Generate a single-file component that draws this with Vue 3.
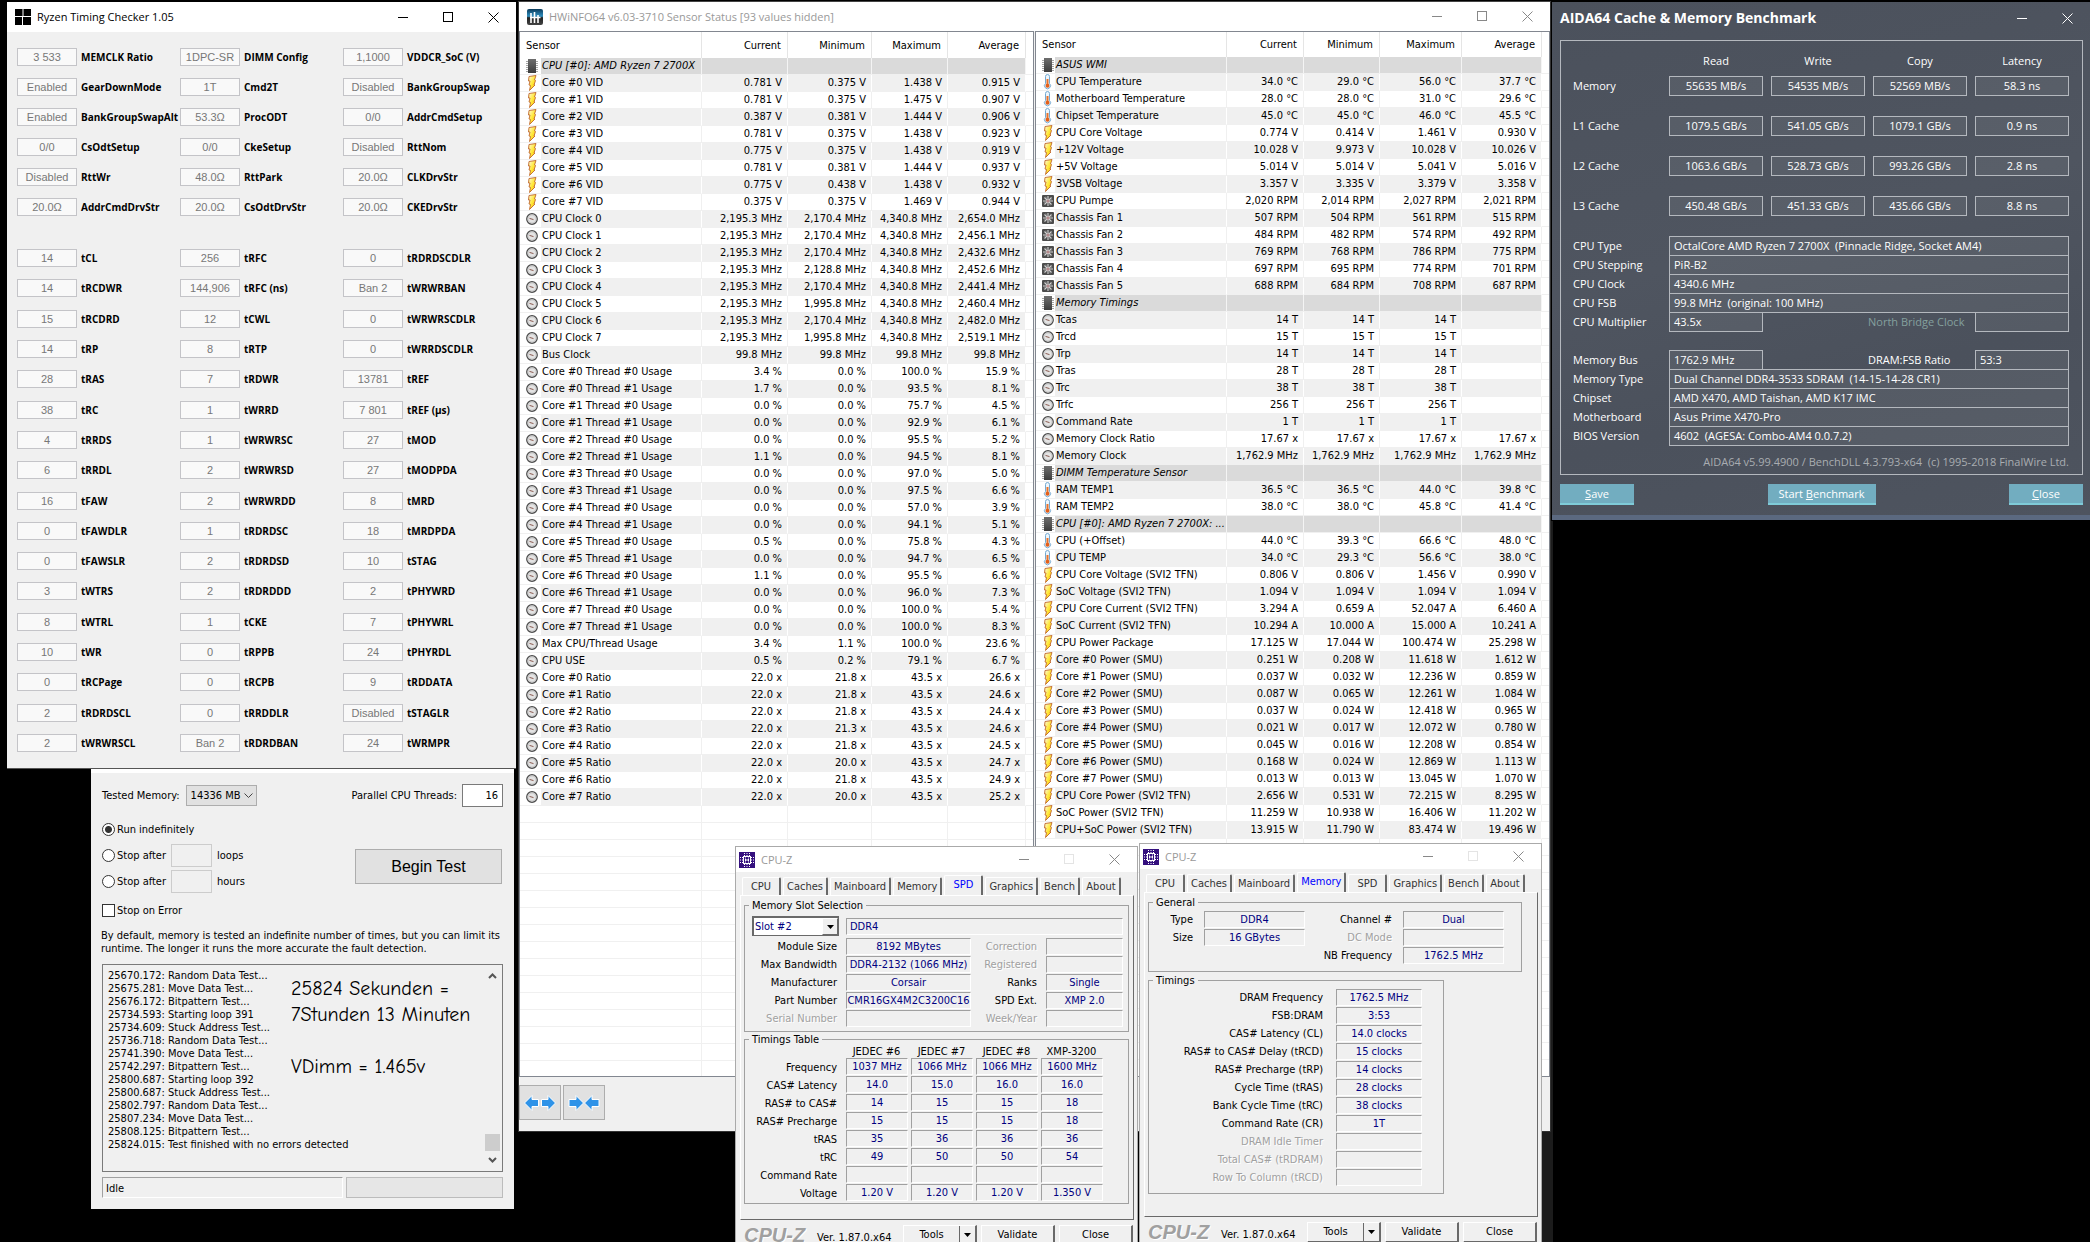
<script setup>
const rtcTop = [
  ['3 533', 'MEMCLK Ratio'], ['1DPC-SR', 'DIMM Config'], ['1,1000', 'VDDCR_SoC (V)'],
  ['Enabled', 'GearDownMode'], ['1T', 'Cmd2T'], ['Disabled', 'BankGroupSwap'],
  ['Enabled', 'BankGroupSwapAlt'], ['53.3Ω', 'ProcODT'], ['0/0', 'AddrCmdSetup'],
  ['0/0', 'CsOdtSetup'], ['0/0', 'CkeSetup'], ['Disabled', 'RttNom'],
  ['Disabled', 'RttWr'], ['48.0Ω', 'RttPark'], ['20.0Ω', 'CLKDrvStr'],
  ['20.0Ω', 'AddrCmdDrvStr'], ['20.0Ω', 'CsOdtDrvStr'], ['20.0Ω', 'CKEDrvStr'],
]
const rtcBottom = [
  ['14', 'tCL'], ['256', 'tRFC'], ['0', 'tRDRDSCDLR'],
  ['14', 'tRCDWR'], ['144,906', 'tRFC (ns)'], ['Ban 2', 'tWRWRBAN'],
  ['15', 'tRCDRD'], ['12', 'tCWL'], ['0', 'tWRWRSCDLR'],
  ['14', 'tRP'], ['8', 'tRTP'], ['0', 'tWRRDSCDLR'],
  ['28', 'tRAS'], ['7', 'tRDWR'], ['13781', 'tREF'],
  ['38', 'tRC'], ['1', 'tWRRD'], ['7 801', 'tREF (µs)'],
  ['4', 'tRRDS'], ['1', 'tWRWRSC'], ['27', 'tMOD'],
  ['6', 'tRRDL'], ['2', 'tWRWRSD'], ['27', 'tMODPDA'],
  ['16', 'tFAW'], ['2', 'tWRWRDD'], ['8', 'tMRD'],
  ['0', 'tFAWDLR'], ['1', 'tRDRDSC'], ['18', 'tMRDPDA'],
  ['0', 'tFAWSLR'], ['2', 'tRDRDSD'], ['10', 'tSTAG'],
  ['3', 'tWTRS'], ['2', 'tRDRDDD'], ['2', 'tPHYWRD'],
  ['8', 'tWTRL'], ['1', 'tCKE'], ['7', 'tPHYWRL'],
  ['10', 'tWR'], ['0', 'tRPPB'], ['24', 'tPHYRDL'],
  ['0', 'tRCPage'], ['0', 'tRCPB'], ['9', 'tRDDATA'],
  ['2', 'tRDRDSCL'], ['0', 'tRRDDLR'], ['Disabled', 'tSTAGLR'],
  ['2', 'tWRWRSCL'], ['Ban 2', 'tRDRDBAN'], ['24', 'tWRMPR'],
]

const log = `25670.172: Random Data Test...
25675.281: Move Data Test...
25676.172: Bitpattern Test...
25734.593: Starting loop 391
25734.609: Stuck Address Test...
25736.718: Random Data Test...
25741.390: Move Data Test...
25742.297: Bitpattern Test...
25800.687: Starting loop 392
25800.687: Stuck Address Test...
25802.797: Random Data Test...
25807.234: Move Data Test...
25808.125: Bitpattern Test...
25824.015: Test finished with no errors detected`

/* One sensor per line: icon|name|unit|current|minimum|maximum|average */
const parse = (text) =>
  text.trim().split('\n').map((line) => {
    const [icon, name, unit, ...nums] = line.trim().split('|')
    return { icon, name, values: [0, 1, 2, 3].map((i) => (nums[i] ? `${nums[i]} ${unit}` : '')) }
  })

const leftRows = parse(`
chip|CPU [#0]: AMD Ryzen 7 2700X
bolt|Core #0 VID|V|0.781|0.375|1.438|0.915
bolt|Core #1 VID|V|0.781|0.375|1.475|0.907
bolt|Core #2 VID|V|0.387|0.381|1.444|0.906
bolt|Core #3 VID|V|0.781|0.375|1.438|0.923
bolt|Core #4 VID|V|0.775|0.375|1.438|0.919
bolt|Core #5 VID|V|0.781|0.381|1.444|0.937
bolt|Core #6 VID|V|0.775|0.438|1.438|0.932
bolt|Core #7 VID|V|0.375|0.375|1.469|0.944
clock|CPU Clock 0|MHz|2,195.3|2,170.4|4,340.8|2,654.0
clock|CPU Clock 1|MHz|2,195.3|2,170.4|4,340.8|2,456.1
clock|CPU Clock 2|MHz|2,195.3|2,170.4|4,340.8|2,432.6
clock|CPU Clock 3|MHz|2,195.3|2,128.8|4,340.8|2,452.6
clock|CPU Clock 4|MHz|2,195.3|2,170.4|4,340.8|2,441.4
clock|CPU Clock 5|MHz|2,195.3|1,995.8|4,340.8|2,460.4
clock|CPU Clock 6|MHz|2,195.3|2,170.4|4,340.8|2,482.0
clock|CPU Clock 7|MHz|2,195.3|1,995.8|4,340.8|2,519.1
clock|Bus Clock|MHz|99.8|99.8|99.8|99.8
clock|Core #0 Thread #0 Usage|%|3.4|0.0|100.0|15.9
clock|Core #0 Thread #1 Usage|%|1.7|0.0|93.5|8.1
clock|Core #1 Thread #0 Usage|%|0.0|0.0|75.7|4.5
clock|Core #1 Thread #1 Usage|%|0.0|0.0|92.9|6.1
clock|Core #2 Thread #0 Usage|%|0.0|0.0|95.5|5.2
clock|Core #2 Thread #1 Usage|%|1.1|0.0|94.5|8.1
clock|Core #3 Thread #0 Usage|%|0.0|0.0|97.0|5.0
clock|Core #3 Thread #1 Usage|%|0.0|0.0|97.5|6.6
clock|Core #4 Thread #0 Usage|%|0.0|0.0|57.0|3.9
clock|Core #4 Thread #1 Usage|%|0.0|0.0|94.1|5.1
clock|Core #5 Thread #0 Usage|%|0.5|0.0|75.8|4.3
clock|Core #5 Thread #1 Usage|%|0.0|0.0|94.7|6.5
clock|Core #6 Thread #0 Usage|%|1.1|0.0|95.5|6.6
clock|Core #6 Thread #1 Usage|%|0.0|0.0|96.0|7.3
clock|Core #7 Thread #0 Usage|%|0.0|0.0|100.0|5.4
clock|Core #7 Thread #1 Usage|%|0.0|0.0|100.0|8.3
clock|Max CPU/Thread Usage|%|3.4|1.1|100.0|23.6
clock|CPU USE|%|0.5|0.2|79.1|6.7
clock|Core #0 Ratio|x|22.0|21.8|43.5|26.6
clock|Core #1 Ratio|x|22.0|21.8|43.5|24.6
clock|Core #2 Ratio|x|22.0|21.8|43.5|24.4
clock|Core #3 Ratio|x|22.0|21.3|43.5|24.6
clock|Core #4 Ratio|x|22.0|21.8|43.5|24.5
clock|Core #5 Ratio|x|22.0|20.0|43.5|24.7
clock|Core #6 Ratio|x|22.0|21.8|43.5|24.9
clock|Core #7 Ratio|x|22.0|20.0|43.5|25.2`)

const rightRows = parse(`
chip|ASUS WMI
temp|CPU Temperature|°C|34.0|29.0|56.0|37.7
temp|Motherboard Temperature|°C|28.0|28.0|31.0|29.6
temp|Chipset Temperature|°C|45.0|45.0|46.0|45.5
bolt|CPU Core Voltage|V|0.774|0.414|1.461|0.930
bolt|+12V Voltage|V|10.028|9.973|10.028|10.026
bolt|+5V Voltage|V|5.014|5.014|5.041|5.016
bolt|3VSB Voltage|V|3.357|3.335|3.379|3.358
fan|CPU Pumpe|RPM|2,020|2,014|2,027|2,021
fan|Chassis Fan 1|RPM|507|504|561|515
fan|Chassis Fan 2|RPM|484|482|574|492
fan|Chassis Fan 3|RPM|769|768|786|775
fan|Chassis Fan 4|RPM|697|695|774|701
fan|Chassis Fan 5|RPM|688|684|708|687
chip|Memory Timings
clock|Tcas|T|14|14|14
clock|Trcd|T|15|15|15
clock|Trp|T|14|14|14
clock|Tras|T|28|28|28
clock|Trc|T|38|38|38
clock|Trfc|T|256|256|256
clock|Command Rate|T|1|1|1
clock|Memory Clock Ratio|x|17.67|17.67|17.67|17.67
clock|Memory Clock|MHz|1,762.9|1,762.9|1,762.9|1,762.9
chip|DIMM Temperature Sensor
temp|RAM TEMP1|°C|36.5|36.5|44.0|39.8
temp|RAM TEMP2|°C|38.0|38.0|45.8|41.4
chip|CPU [#0]: AMD Ryzen 7 2700X: ...
temp|CPU (+Offset)|°C|44.0|39.3|66.6|48.0
temp|CPU TEMP|°C|34.0|29.3|56.6|38.0
bolt|CPU Core Voltage (SVI2 TFN)|V|0.806|0.806|1.456|0.990
bolt|SoC Voltage (SVI2 TFN)|V|1.094|1.094|1.094|1.094
bolt|CPU Core Current (SVI2 TFN)|A|3.294|0.659|52.047|6.460
bolt|SoC Current (SVI2 TFN)|A|10.294|10.000|15.000|10.241
bolt|CPU Power Package|W|17.125|17.044|100.474|25.298
bolt|Core #0 Power (SMU)|W|0.251|0.208|11.618|1.612
bolt|Core #1 Power (SMU)|W|0.037|0.032|12.236|0.859
bolt|Core #2 Power (SMU)|W|0.087|0.065|12.261|1.084
bolt|Core #3 Power (SMU)|W|0.037|0.024|12.418|0.965
bolt|Core #4 Power (SMU)|W|0.021|0.017|12.072|0.780
bolt|Core #5 Power (SMU)|W|0.045|0.016|12.208|0.854
bolt|Core #6 Power (SMU)|W|0.168|0.024|12.869|1.113
bolt|Core #7 Power (SMU)|W|0.013|0.013|13.045|1.070
bolt|CPU Core Power (SVI2 TFN)|W|2.656|0.531|72.215|8.295
bolt|SoC Power (SVI2 TFN)|W|11.259|10.938|16.406|11.202
bolt|CPU+SoC Power (SVI2 TFN)|W|13.915|11.790|83.474|19.496`)

const panels = [
  { id: 'left', rows: leftRows, empty: 16, cols: [21, 161, 86, 84, 76, 78] },
  { id: 'right', rows: rightRows, empty: 15, cols: [19, 172, 77, 76, 82, 80] },
]
const columns = ['Current', 'Minimum', 'Maximum', 'Average']

const benchmarks = [
  ['Memory', '55635 MB/s', '54535 MB/s', '52569 MB/s', '58.3 ns'],
  ['L1 Cache', '1079.5 GB/s', '541.05 GB/s', '1079.1 GB/s', '0.9 ns'],
  ['L2 Cache', '1063.6 GB/s', '528.73 GB/s', '993.26 GB/s', '2.8 ns'],
  ['L3 Cache', '450.48 GB/s', '451.33 GB/s', '435.66 GB/s', '8.8 ns'],
]
const cpuInfo = [
  { label: 'CPU Type', value: 'OctalCore AMD Ryzen 7 2700X  (Pinnacle Ridge, Socket AM4)' },
  { label: 'CPU Stepping', value: 'PiR-B2' },
  { label: 'CPU Clock', value: '4340.6 MHz' },
  { label: 'CPU FSB', value: '99.8 MHz  (original: 100 MHz)' },
  { label: 'CPU Multiplier', value: '43.5x', label2: 'North Bridge Clock', value2: '', off: true },
]
const memInfo = [
  { label: 'Memory Bus', value: '1762.9 MHz', label2: 'DRAM:FSB Ratio', value2: '53:3' },
  { label: 'Memory Type', value: 'Dual Channel DDR4-3533 SDRAM  (14-15-14-28 CR1)' },
  { label: 'Chipset', value: 'AMD X470, AMD Taishan, AMD K17 IMC' },
  { label: 'Motherboard', value: 'Asus Prime X470-Pro' },
  { label: 'BIOS Version', value: '4602  (AGESA: Combo-AM4 0.0.7.2)' },
]

const tabs = ['CPU', 'Caches', 'Mainboard', 'Memory', 'SPD', 'Graphics', 'Bench', 'About']
const spdFields = [
  ['Module Size', '8192 MBytes', 'Correction', ''],
  ['Max Bandwidth', 'DDR4-2132 (1066 MHz)', 'Registered', ''],
  ['Manufacturer', 'Corsair', 'Ranks', 'Single'],
  ['Part Number', 'CMR16GX4M2C3200C16', 'SPD Ext.', 'XMP 2.0'],
  ['Serial Number', '', 'Week/Year', ''],
]
const profiles = ['JEDEC #6', 'JEDEC #7', 'JEDEC #8', 'XMP-3200']
const profileRows = [
  ['Frequency', '1037 MHz', '1066 MHz', '1066 MHz', '1600 MHz'],
  ['CAS# Latency', '14.0', '15.0', '16.0', '16.0'],
  ['RAS# to CAS#', '14', '15', '15', '18'],
  ['RAS# Precharge', '15', '15', '15', '18'],
  ['tRAS', '35', '36', '36', '36'],
  ['tRC', '49', '50', '50', '54'],
  ['Command Rate', '', '', '', ''],
  ['Voltage', '1.20 V', '1.20 V', '1.20 V', '1.350 V'],
]
const memTimings = [
  ['DRAM Frequency', '1762.5 MHz'],
  ['FSB:DRAM', '3:53'],
  ['CAS# Latency (CL)', '14.0 clocks'],
  ['RAS# to CAS# Delay (tRCD)', '15 clocks'],
  ['RAS# Precharge (tRP)', '14 clocks'],
  ['Cycle Time (tRAS)', '28 clocks'],
  ['Bank Cycle Time (tRC)', '38 clocks'],
  ['Command Rate (CR)', '1T'],
  ['DRAM Idle Timer', ''],
  ['Total CAS# (tRDRAM)', ''],
  ['Row To Column (tRCD)', ''],
]
const cpuzWindows = [
  { id: 'spd', active: 'SPD' },
  { id: 'mem', active: 'Memory' },
]
</script>

<template>
  <main class="desktop">
    <svg class="defs" aria-hidden="true">
      <defs>
        <linearGradient id="boltFill" x1="0" y1="0" x2="1" y2="1">
          <stop offset="0" stop-color="#fffbe0" /><stop offset=".5" stop-color="#ffe83a" /><stop offset="1" stop-color="#ffb800" />
        </linearGradient>
        <linearGradient id="chipFill" x1="0" y1="0" x2="0" y2="1">
          <stop offset="0" stop-color="#6e6e6e" /><stop offset="1" stop-color="#3c3c3c" />
        </linearGradient>
        <linearGradient id="hwFill" x1="0" y1="0" x2="0" y2="1">
          <stop offset="0" stop-color="#0a3a5a" /><stop offset=".45" stop-color="#2f8fc0" />
          <stop offset=".55" stop-color="#222" /><stop offset="1" stop-color="#444" />
        </linearGradient>
      </defs>
      <symbol id="i-bolt" viewBox="0 0 12 16">
        <path d="M3 1.500L10 .5L8.500 5L9.500 5.500L8 10H9L3.500 15.500L4.500 10.500L3 10L4 6H2.500Z" fill="url(#boltFill)" stroke="#c0682e" stroke-width=".9" />
      </symbol>
      <symbol id="i-clock" viewBox="0 0 12 16">
        <circle cx="6" cy="8" r="5.300" fill="#e4e4e4" stroke="#4a4a4a" stroke-width="1.200" />
        <circle cx="6" cy="8" r="4" fill="none" stroke="#bdbdbd" stroke-width=".6" />
        <path d="M3.500 7.400L7.500 8.600" stroke="#8a5a50" />
      </symbol>
      <symbol id="i-chip" viewBox="0 0 12 16">
        <path d="M0 3.500H12M0 5.500H12M0 7.500H12M0 9.500H12M0 11.500H12M0 13.500H12" stroke="#a5a5a5" />
        <rect x="2" y="1" width="8" height="14" fill="url(#chipFill)" />
      </symbol>
      <symbol id="i-temp" viewBox="0 0 12 16">
        <path d="M3.500 2.500a2 2 0 0 1 4 0V9.500a3 3 0 1 1-4 0Z" fill="#eef6fc" stroke="#74a9d2" />
        <rect x="4.500" y="5" width="2" height="6" fill="#e8732c" />
        <circle cx="5.500" cy="11.800" r="2" fill="#e2601c" />
      </symbol>
      <symbol id="i-fan" viewBox="0 0 12 16">
        <rect x="0" y="2" width="12" height="12" rx="1" fill="#4c4c4c" />
        <path d="M6 3V13M1 8H11M2.500 4.500L9.500 11.500M9.500 4.500L2.500 11.500" stroke="#d2d2d2" stroke-width="1.100" />
        <circle cx="6" cy="8" r="1.600" fill="#b5898b" />
        <path d="M3.800 3.500L4.800 6M8.200 12.500L7.200 10M1.800 10L4.200 9M10.200 6L7.800 7" stroke="#8d8d8d" stroke-width=".8" />
      </symbol>
    </svg>

    <div class="backdrop"></div>

    <!-- Memory tester -->
    <section class="window memtest" aria-label="Memory test">
      <div class="mt-row mt-top">
        <label for="mt-mem">Tested Memory:</label>
        <div class="mt-select">
          <select id="mt-mem"><option>14336 MB</option></select>
          <svg width="9" height="6" viewBox="0 0 9 6"><path d="M.5 .5L4.500 4.500L8.500 .5" fill="none" stroke="#444" /></svg>
        </div>
        <label for="mt-thr" class="push">Parallel CPU Threads:</label>
        <input id="mt-thr" class="mt-threads" type="text" value="16" />
      </div>
      <div class="mt-options">
        <div class="mt-radios">
          <div class="mt-row"><input id="r1" type="radio" name="run" checked /><label for="r1">Run indefinitely</label></div>
          <div class="mt-row">
            <input id="r2" type="radio" name="run" /><label for="r2">Stop after</label>
            <input class="mt-count" type="text" disabled aria-label="loops" /><span>loops</span>
          </div>
          <div class="mt-row">
            <input id="r3" type="radio" name="run" /><label for="r3">Stop after</label>
            <input class="mt-count" type="text" disabled aria-label="hours" /><span>hours</span>
          </div>
        </div>
        <button class="mt-begin" type="button">Begin Test</button>
      </div>
      <div class="mt-row mt-error"><input id="soe" type="checkbox" /><label for="soe">Stop on Error</label></div>
      <p class="mt-text">By default, memory is tested an indefinite number of times, but you can limit its<br />runtime. The longer it runs the more accurate the fault detection.</p>
      <div class="mt-log">
        <textarea readonly aria-label="Log" :value="log"></textarea>
        <div class="mt-scroll">
          <svg width="9" height="6" viewBox="0 0 9 6"><path d="M1 5L4.500 1.500L8 5" fill="none" stroke="#555" stroke-width="2" /></svg>
          <i></i>
          <svg width="9" height="6" viewBox="0 0 9 6"><path d="M1 1L4.500 4.500L8 1" fill="none" stroke="#555" stroke-width="2" /></svg>
        </div>
        <p class="mt-note">25824 Sekunden =<br />7Stunden 13 Minuten<br /><br />VDimm = 1.465v</p>
      </div>
      <div class="mt-status"><span>Idle</span><div></div></div>
    </section>

    <!-- Ryzen Timing Checker -->
    <section class="window rtc" aria-label="Ryzen Timing Checker">
      <header class="title">
        <svg width="16" height="16" viewBox="0 0 16 16"><rect width="16" height="16" /><path d="M8 0V7M7.500 8V16M0 7.500H16" stroke="#fff" /></svg>
        <h1>Ryzen Timing Checker 1.05</h1>
        <div class="controls">
          <button type="button" aria-label="Minimize"><svg width="11" height="11" viewBox="0 0 11 11"><path d="M0 5.500H10" /></svg></button>
          <button type="button" aria-label="Maximize"><svg width="11" height="11" viewBox="0 0 11 11"><rect x=".5" y=".5" width="9" height="9" /></svg></button>
          <button type="button" aria-label="Close"><svg width="11" height="11" viewBox="0 0 11 11"><path d="M.5 .5L10.500 10.500M10.500 .5L.5 10.500" /></svg></button>
        </div>
      </header>
      <div class="rtc-grid">
        <label v-for="[value, name] in rtcTop" :key="name"><input type="text" disabled :value="value" /><b>{{ name }}</b></label>
      </div>
      <div class="rtc-grid rtc-timings">
        <label v-for="[value, name] in rtcBottom" :key="name"><input type="text" disabled :value="value" /><b>{{ name }}</b></label>
      </div>
    </section>

    <!-- HWiNFO sensors -->
    <section class="window hw" aria-label="HWiNFO64">
      <header class="title dim">
        <svg width="16" height="16" viewBox="0 0 16 16">
          <rect width="16" height="16" rx="2" fill="url(#hwFill)" />
          <path d="M4 4V8M7.500 3V8M11 6V8M3 8.500H13.500M4 9V14M7.500 9V14M11 9V14" stroke="#fff" stroke-width="1.600" />
        </svg>
        <h1>HWiNFO64 v6.03-3710 Sensor Status [93 values hidden]</h1>
        <div class="controls">
          <button type="button" aria-label="Minimize"><svg width="11" height="11" viewBox="0 0 11 11"><path d="M0 5.500H10" /></svg></button>
          <button type="button" aria-label="Maximize"><svg width="11" height="11" viewBox="0 0 11 11"><rect x=".5" y=".5" width="9" height="9" /></svg></button>
          <button type="button" aria-label="Close"><svg width="11" height="11" viewBox="0 0 11 11"><path d="M.5 .5L10.500 10.500M10.500 .5L.5 10.500" /></svg></button>
        </div>
      </header>
      <div class="hw-panels">
        <div v-for="p in panels" :key="p.id" class="hw-panel" :class="p.id">
          <table>
            <colgroup>
              <col v-for="(w, i) in p.cols" :key="i" :style="{ width: w + 'px' }" />
              <col />
            </colgroup>
            <thead>
              <tr><th colspan="2" class="first">Sensor</th><th v-for="c in columns" :key="c">{{ c }}</th><th class="rest"></th></tr>
            </thead>
            <tbody>
              <tr v-for="(r, i) in p.rows" :key="i" :class="{ group: r.icon === 'chip', odd: i % 2 }">
                <td class="icon"><svg width="12" height="16"><use :href="'#i-' + r.icon" /></svg></td>
                <td class="name">{{ r.name }}</td>
                <td v-for="(v, j) in r.values" :key="j">{{ v }}</td>
                <td class="rest"></td>
              </tr>
              <tr v-for="n in p.empty" :key="'e' + n" aria-hidden="true">
                <td class="icon"></td><td class="name"></td><td></td><td></td><td></td><td></td><td class="rest"></td>
              </tr>
            </tbody>
          </table>
        </div>
      </div>
      <footer class="hw-tools">
        <button type="button" aria-label="Expand">
          <svg width="34" height="18" viewBox="0 0 34 18"><path d="M1.500 9L9 1.500V5.500H15.500V12.500H9V16.500ZM32.500 9L25 1.500V5.500H18.500V12.500H25V16.500Z" fill="#2f93e8" stroke="#fff" /></svg>
        </button>
        <button type="button" aria-label="Collapse">
          <svg width="34" height="18" viewBox="0 0 34 18"><path d="M16.500 9L9 1.500V5.500H2V12.500H9V16.500ZM17.500 9L25 1.500V5.500H32V12.500H25V16.500Z" fill="#2f93e8" stroke="#fff" /></svg>
        </button>
      </footer>
    </section>

    <!-- AIDA64 benchmark -->
    <section class="window aida" aria-label="AIDA64">
      <header class="aida-title">
        <h1>AIDA64 Cache &amp; Memory Benchmark</h1>
        <div class="controls">
          <button type="button" aria-label="Minimize"><svg width="11" height="11" viewBox="0 0 11 11"><path d="M0 5.500H10" /></svg></button>
          <button type="button" aria-label="Close"><svg width="11" height="11" viewBox="0 0 11 11"><path d="M.5 .5L10.500 10.500M10.500 .5L.5 10.500" /></svg></button>
        </div>
      </header>
      <div class="aida-frame">
        <table class="aida-bench">
          <thead><tr><th></th><th>Read</th><th>Write</th><th>Copy</th><th>Latency</th></tr></thead>
          <tbody>
            <tr v-for="b in benchmarks" :key="b[0]">
              <th scope="row">{{ b[0] }}</th>
              <td v-for="v in b.slice(1)" :key="v"><span>{{ v }}</span></td>
            </tr>
          </tbody>
        </table>
        <div v-for="(group, g) in [cpuInfo, memInfo]" :key="g" class="aida-info">
          <div v-for="r in group" :key="r.label" class="aida-row" :class="{ split: r.label2 }">
            <span>{{ r.label }}</span><output>{{ r.value }}</output>
            <template v-if="r.label2">
              <span class="second" :class="{ off: r.off }">{{ r.label2 }}</span><output>{{ r.value2 }}</output>
            </template>
          </div>
        </div>
        <p class="aida-ver">AIDA64 v5.99.4900 / BenchDLL 4.3.793-x64&nbsp; (c) 1995-2018 FinalWire Ltd.</p>
      </div>
      <footer class="aida-buttons">
        <button type="button"><u>S</u>ave</button>
        <button type="button" class="wide">Start <u>B</u>enchmark</button>
        <button type="button"><u>C</u>lose</button>
      </footer>
    </section>

    <!-- CPU-Z, SPD and Memory pages -->
    <section v-for="w in cpuzWindows" :key="w.id" class="window cpuz" :class="w.id" aria-label="CPU-Z">
      <header class="title dim">
        <svg width="16" height="16" viewBox="0 0 16 16">
          <rect width="16" height="16" fill="#35107e" />
          <rect x="4.500" y="4.500" width="7" height="7" fill="none" stroke="#fff" />
          <path d="M6 6H7M9 6H10M7 8H9M6 10H7M9 10H10M6.500 7V9M9.500 7V9" stroke="#fff" />
          <path d="M5.500 1V4M8 1V4M10.500 1V4M5.500 12V15M8 12V15M10.500 12V15M1 5.500H4M1 8H4M1 10.500H4M12 5.500H15M12 8H15M12 10.500H15" stroke="#fff" stroke-dasharray="1 1" />
        </svg>
        <h1>CPU-Z</h1>
        <div class="controls">
          <button type="button" aria-label="Minimize"><svg width="11" height="11" viewBox="0 0 11 11"><path d="M0 5.500H10" /></svg></button>
          <button type="button" aria-label="Maximize" disabled><svg width="11" height="11" viewBox="0 0 11 11"><rect x=".5" y=".5" width="9" height="9" /></svg></button>
          <button type="button" aria-label="Close"><svg width="11" height="11" viewBox="0 0 11 11"><path d="M.5 .5L10.500 10.500M10.500 .5L.5 10.500" /></svg></button>
        </div>
      </header>
      <nav class="tabs" role="tablist">
        <button v-for="t in tabs" :key="t" type="button" role="tab" :aria-selected="t === w.active">{{ t }}</button>
      </nav>
      <div class="page">
        <template v-if="w.id === 'spd'">
          <fieldset class="slot">
            <legend>Memory Slot Selection</legend>
            <div class="slot-top">
              <div class="combo">
                <select aria-label="Slot"><option>Slot #2</option></select>
                <i><svg width="7" height="4" viewBox="0 0 7 4"><path d="M0 0H7L3.500 4Z" /></svg></i>
              </div>
              <output class="field start">DDR4</output>
            </div>
            <div v-for="f in spdFields" :key="f[0]" class="slot-row">
              <span :class="{ off: !f[1] }">{{ f[0] }}</span><output class="field">{{ f[1] }}</output>
              <span :class="{ off: !f[3] }">{{ f[2] }}</span><output class="field">{{ f[3] }}</output>
            </div>
          </fieldset>
          <fieldset class="profiles">
            <legend>Timings Table</legend>
            <table>
              <thead><tr><th class="side"></th><th v-for="p in profiles" :key="p">{{ p }}</th></tr></thead>
              <tbody>
                <tr v-for="r in profileRows" :key="r[0]">
                  <th scope="row" class="side">{{ r[0] }}</th>
                  <td v-for="(v, i) in r.slice(1)" :key="i"><span class="field">{{ v }}</span></td>
                </tr>
              </tbody>
            </table>
          </fieldset>
        </template>
        <template v-else>
          <fieldset class="general">
            <legend>General</legend>
            <div class="gen-row"><span>Type</span><output class="field">DDR4</output><span>Channel #</span><output class="field">Dual</output></div>
            <div class="gen-row"><span>Size</span><output class="field">16 GBytes</output><span class="off">DC Mode</span><output class="field"></output></div>
            <div class="gen-row"><i></i><i></i><span>NB Frequency</span><output class="field">1762.5 MHz</output></div>
          </fieldset>
          <fieldset class="timings">
            <legend>Timings</legend>
            <div v-for="t in memTimings" :key="t[0]" class="tim-row">
              <span :class="{ off: !t[1] }">{{ t[0] }}</span><output class="field">{{ t[1] }}</output>
            </div>
          </fieldset>
        </template>
      </div>
      <footer class="cpuz-foot">
        <strong>CPU-Z</strong>
        <span>Ver. 1.87.0.x64</span>
        <div class="btns">
          <button type="button" class="tools"><span>Tools</span><i><svg width="7" height="4" viewBox="0 0 7 4"><path d="M0 0H7L3.500 4Z" /></svg></i></button>
          <button type="button">Validate</button>
          <button type="button">Close</button>
        </div>
      </footer>
    </section>
  </main>
</template>

<style>
html, body { background: #000; }
</style>

<style scoped>
* { box-sizing: border-box; }
.desktop {
  --ui: "DejaVu Sans Condensed", "DejaVu Sans", sans-serif;
  --segoe: "Open Sans", "Noto Sans", sans-serif;
  position: relative;
  height: 100vh;
  overflow: hidden;
  background: #000;
  color: #000;
  font: 11px/13px var(--ui);
}
button, input, select, textarea { font: inherit; color: inherit; margin: 0; padding: 0; border-radius: 0; }
h1, p { margin: 0; font-weight: normal; }
output { display: block; }
.defs { position: absolute; width: 0; height: 0; }
.window { position: absolute; background: #f0f0f0; }
.backdrop { position: absolute; left: 1541px; width: 12px; top: 521px; bottom: 0; background: #1c1c1c; }

/* Title bars */
.title { display: flex; align-items: center; background: #fff; height: 30px; padding-left: 8px; }
.title h1 { margin-left: 6px; font: 11px/16px var(--segoe); }
.title.dim h1 { color: #999; }
.controls { display: flex; margin-left: auto; }
.controls button { display: grid; place-items: center; width: 45px; height: 28px; border: 0; background: none; }
.controls svg { fill: none; stroke: #000; }
.dim .controls svg { stroke: #888; }
.dim .controls button:disabled svg { stroke: #e4e4e4; }

/* Ryzen Timing Checker */
.rtc { left: 7px; top: 2px; width: 509px; border-bottom: 1px solid #555; padding-bottom: 16px; }
.rtc-grid { display: grid; grid-template-columns: repeat(3, 163px); row-gap: 12px; padding: 16px 0 0 10px; }
.rtc-timings { height: 536px; padding-top: 33px; row-gap: 0; align-content: space-between; }
.rtc-grid label { display: flex; align-items: center; gap: 4px; height: 18px; white-space: nowrap; }
.rtc-grid input { width: 60px; height: 18px; flex: none; border: 1px solid #c4c4c8; background: #f9f9f9; color: #777; text-align: center; font: 11px/16px "Liberation Sans", Arial, sans-serif; }
.rtc-grid b { font: bold 10px/16px var(--segoe); }

/* Memory tester */
.memtest { left: 91px; top: 768px; width: 423px; border-top: 5px solid #fff; padding: 11px; }
.mt-row { display: flex; align-items: center; }
.mt-top { height: 23px; }
.mt-select { position: relative; margin-left: 6px; }
.mt-select select { appearance: none; width: 71px; height: 21px; padding-left: 4px; border: 1px solid #adadad; background: #e1e1e1; }
.mt-select svg { position: absolute; right: 4px; top: 8px; }
.push { margin-left: auto; }
.mt-threads { width: 41px; height: 23px; margin-left: 5px; padding-right: 4px; text-align: right; border: 1px solid #7a7a7a; background: #fff; }
.mt-options { display: flex; justify-content: space-between; align-items: flex-end; padding-top: 9px; padding-right: 1px; }
.mt-radios .mt-row { height: 26px; }
input[type="radio"], input[type="checkbox"] { appearance: none; flex: none; width: 13px; height: 13px; margin-right: 2px; border: 1px solid #333; background: #fff; }
input[type="radio"] { border-radius: 50%; }
input[type="radio"]:checked { background: radial-gradient(circle, #333 0 3px, #fff 4px); }
.mt-count { width: 41px; height: 23px; margin: 0 5px; border: 1px solid #ccc; background: #f0f0f0; }
.mt-begin { width: 147px; height: 35px; margin-bottom: 10px; border: 1px solid #adadad; background: #e1e1e1; font: 16px/20px "Liberation Sans", Arial, sans-serif; }
.mt-error { height: 13px; margin-top: 10px; }
.mt-text { margin: 12px -10px 9px -1px; }
.mt-log { position: relative; display: flex; height: 208px; border: 1px solid #7a7a7a; padding: 1px; }
.mt-log textarea { flex: 1; border: 0; outline: 0; resize: none; overflow: hidden; background: none; padding: 3px 4px; line-height: 13px; white-space: pre; }
.mt-scroll { display: flex; flex-direction: column; align-items: center; width: 18px; padding: 7px 0; }
.mt-scroll i { width: 15px; height: 17px; margin: auto 0 6px; background: #cdcdcd; }
.mt-note { position: absolute; left: 188px; top: 11px; font: 20px/26px "Comic Sans MS", "Comic Neue", "Noto Sans", sans-serif; white-space: nowrap; }
.mt-status { display: flex; gap: 3px; margin-top: 5px; height: 21px; }
.mt-status span { flex: 3; padding: 4px 3px; border: 1px solid #a0a0a0; border-color: #a0a0a0 #fff #fff #a0a0a0; }
.mt-status div { flex: 2; border: 1px solid #bcbcbc; background: #e6e6e6; }

/* HWiNFO */
.hw { left: 518px; top: 1px; width: 1033px; border: 1px solid #333; border-top-color: #444; }
.hw .title { height: 29px; }
.hw-panels { display: flex; gap: 1px; }
.hw-panel { flex: 1; height: 1046px; overflow: hidden; background: #fff; border: 1px solid #828790; }
.hw-panel table { width: 100%; table-layout: fixed; border-collapse: separate; border-spacing: 0; }
.hw th { height: 26px; padding: 0 6px 0 0; font-weight: normal; text-align: right; border-right: 1px solid #e5e5e5; }
.hw-panel.right th { height: 25px; }
.hw th.first { text-align: left; padding-left: 6px; }
.hw td { height: 17px; padding: 0 5px 0 0; line-height: 16px; text-align: right; white-space: nowrap; border-right: 1px solid #f0f0f0; border-bottom: 1px solid #f0f0f0; }
.hw td.icon { border-right: 0; padding: 0 0 0 6px; text-align: left; }
.hw td.icon svg { display: block; }
.hw td.name { text-align: left; padding: 0 0 0 1px; overflow: hidden; }
.hw .rest { border-right: 0; padding: 0; }
.hw tr.odd td:not(.icon, .rest) { background: #f0f0f0; border-right-color: #fff; }
.hw tr.group td:not(.icon, .rest) { background: #dadada; border-right-color: #f4f4f4; }
.hw tr.group .name { font-style: italic; }
.hw-tools { display: flex; gap: 2px; padding: 8px 0 11px; }
.hw-tools button { display: grid; place-items: center; width: 42px; height: 35px; border: 1px solid #adadad; background: #e1e1e1; }

/* AIDA64 */
.aida { left: 1552px; right: 0; top: 2px; padding: 0 7px 10px 8px; border-bottom: 5px solid #5b6980; background: linear-gradient(165deg, #4b515c, #4f5560 45%, #4b515c 70%, #4e545f); color: #fff; font: 11px/18px var(--segoe); }
.aida-title { display: flex; align-items: center; height: 38px; padding-bottom: 6px; }
.aida-title h1 { font: bold 14px/20px var(--segoe); }
.aida .controls { margin-right: -7px; }
.aida .controls svg { stroke: #fff; }
.aida-frame { border: 1px solid #b4b8be; padding: 11px 13px 3px 12px; }
.aida-bench { width: 100%; table-layout: fixed; border-collapse: collapse; }
.aida-bench th { height: 24px; padding: 0; font-weight: normal; vertical-align: top; }
.aida-bench th:not(:first-child) { padding-left: 8px; }
.aida-bench th:first-child { width: 88px; }
.aida-bench tbody th { text-align: left; height: 40px; padding-top: 1px; }
.aida-bench td { height: 40px; padding: 0 0 0 8px; vertical-align: top; }
.aida-bench td span { display: block; height: 20px; border: 1px solid #b4b8be; background: rgb(255 255 255 / 6%); text-align: center; }
.aida-info { margin-bottom: 19px; }
.aida-row { display: grid; grid-template-columns: 96px 1fr; height: 19px; line-height: 20px; }
.aida-row.split { grid-template-columns: 96px 94px 1fr 94px; }
.aida-row .second { justify-self: end; width: 107px; }
.aida-row .off { color: #84a09e; }
.aida-row output { height: 20px; padding-left: 4px; border: 1px solid #b4b8be; background: rgb(255 255 255 / 6%); line-height: 18px; white-space: pre; }
.aida-ver { margin-top: -11px; text-align: right; color: #a9adb1; height: 18px; }
.aida-buttons { display: flex; justify-content: space-between; margin-top: 9px; }
.aida-buttons button { width: 74px; height: 21px; border: 0; border-bottom: 2px solid #7fcbd8; background: #72adc0; }
.aida-buttons .wide { width: 108px; }

/* CPU-Z */
.cpuz { width: 403px; border: 1px solid #aaa; }
.cpuz.spd { left: 735px; top: 846px; }
.cpuz.mem { left: 1139px; top: 843px; }
.cpuz .title { height: 25px; padding-left: 3px; }
.tabs { display: flex; align-items: flex-end; height: 23px; padding-left: 6px; }
.tabs button { min-width: 39px; height: 18px; padding: 0 3px; margin-right: 2px; border: 0; border-top: 1px solid #fff; border-left: 1px solid #fff; border-right: 2px solid #696969; border-radius: 2px 2px 0 0; background: #f0f0f0; color: #333; white-space: nowrap; }
.tabs button[aria-selected="true"] { height: 20px; padding-bottom: 3px; color: #00f; }
.page { height: 325px; margin: 0 3px 0 4px; padding: 3px 4px 4px 3px; border: 1px solid #fff; border-right: 1px solid #696969; border-bottom: 1px solid #696969; }
.cpuz fieldset { margin: 0; padding: 0; border: 1px solid #a0a0a0; min-width: 0; }
.cpuz legend { height: 13px; padding: 0 3px; margin-left: 4px; }
.field { display: block; height: 17px; border: 1px solid #a0a0a0; border-color: #a0a0a0 #fff #fff #a0a0a0; color: #000080; text-align: center; line-height: 15px; white-space: nowrap; overflow: hidden; }
.field.start { text-align: left; padding-left: 3px; }
.cpuz .off { color: #a0a0a0; text-shadow: 1px 1px #fff; }
.cpuz .slot { height: 133px; }
.slot-top { display: grid; grid-template-columns: 87px 1fr; column-gap: 7px; align-items: center; padding: 4px 5px 1px 7px; }
.combo { display: flex; height: 20px; border: 1px solid #696969; border-width: 2px 1px 1px 2px; background: #fff; color: #000080; }
.combo select { appearance: none; flex: 1; width: 40px; padding-left: 1px; border: 0; background: none; }
.combo i, .tools i { display: grid; place-items: center; width: 16px; background: #f0f0f0; border: 1px solid #fff; border-right-color: #696969; border-bottom-color: #696969; }
.slot-row { display: grid; grid-template-columns: 92px 125px 1fr 77px; column-gap: 9px; height: 18px; align-items: center; padding-right: 5px; text-align: right; white-space: nowrap; }
.cpuz .profiles { height: 171px; margin-top: 1px; }
.profiles table { border-collapse: collapse; table-layout: fixed; width: 359px; }
.profiles th { padding: 0; height: 12px; font-weight: normal; }
.profiles thead th { line-height: 11px; vertical-align: top; }
.profiles th.side { width: 99px; padding-right: 7px; text-align: right; white-space: nowrap; }
.profiles tbody th, .profiles td { height: 18px; }
.profiles td { padding: 0 1px 1px 2px; }
.general { width: 374px; height: 76px; }
.gen-row { display: grid; grid-template-columns: 44px 101px 1fr 101px; column-gap: 11px; height: 18px; align-items: center; padding-right: 17px; text-align: right; white-space: nowrap; }
.general legend, .timings legend { margin-bottom: 1px; }
.cpuz .timings { width: 296px; height: 220px; margin-top: 2px; }
.tim-row { display: grid; grid-template-columns: 1fr 86px; column-gap: 13px; height: 18px; align-items: center; padding-right: 21px; text-align: right; white-space: nowrap; }
.cpuz-foot { display: flex; align-items: center; height: 30px; padding: 0 4px 0 8px; }
.cpuz-foot strong { font: italic bold 20px/22px "Liberation Sans", Arial, sans-serif; color: #a0a0a0; text-shadow: 1px 1px #fff; }
.cpuz-foot > span { margin-left: 12px; padding-top: 5px; }
.btns { display: flex; gap: 4px; margin-left: auto; }
.btns button { display: flex; align-items: center; justify-content: center; width: 74px; height: 21px; border: 1px solid #fff; border-right: 2px solid #696969; border-bottom: 2px solid #696969; background: #f0f0f0; }
.tools span { flex: 1; }
.tools i { align-self: stretch; border-width: 0 0 0 1px; border-left-color: #696969; }
</style>
